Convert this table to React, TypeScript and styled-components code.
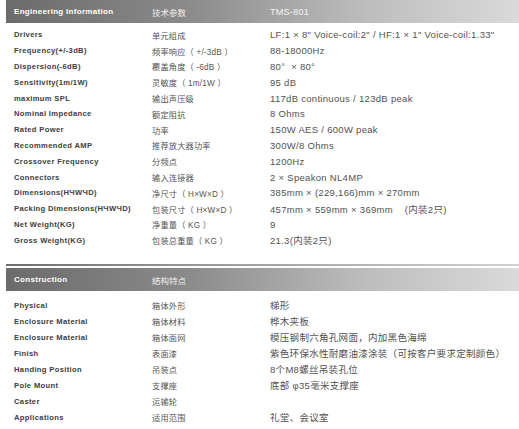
import React from "react";
import styled, { createGlobalStyle } from "styled-components";

const Global = createGlobalStyle`
  html, body { margin: 0; padding: 0; background: #ffffff; }
  body { font-family: "Liberation Sans", Arial, sans-serif; }
`;

const Page = styled.div`
  width: 519px;
  height: 429px;
  padding-left: 6px;
  box-sizing: border-box;
  overflow: hidden;
`;

const Section = styled.section<{ $top: number }>`
  display: flex;
  flex-direction: column;
  margin-top: ${(p) => p.$top}px;
`;

const Rule = styled.div`
  height: 2px;
  margin-bottom: 2px;
  background: linear-gradient(to right, #6e6e6e 0%, #9a9a9a 40%, #d2d2d2 100%);
`;

const HeaderBar = styled.div`
  display: grid;
  grid-template-columns: 138px 118px 1fr;
  align-items: center;
  height: 23px;
  padding-left: 8px;
  background: linear-gradient(to right, #6b6b6b 0%, #8a8a8a 35%, #bdbdbd 70%, #dadada 100%);
  color: #ffffff;
`;

const HeadLabel = styled.span`
  font-family: "Liberation Sans", Arial, sans-serif;
  font-weight: bold;
  font-size: 8px;
  letter-spacing: 0.3px;
`;

const HeadCn = styled.span`
  font-family: "Noto Sans CJK SC", sans-serif;
  font-size: 8.5px;
  color: #f0f0f0;
`;

const HeadValue = styled.span`
  font-family: "Liberation Sans", Arial, sans-serif;
  font-size: 9px;
  letter-spacing: 0.3px;
  color: #f4f4f4;
`;

const Rows = styled.div<{ $pad: number }>`
  display: flex;
  flex-direction: column;
  padding-top: ${(p) => p.$pad}px;
  padding-left: 8px;
`;

const Row = styled.div<{ $h: number }>`
  display: grid;
  grid-template-columns: 138px 118px 1fr;
  align-items: center;
  height: ${(p) => p.$h}px;
`;

const Label = styled.span`
  font-family: "Liberation Sans", Arial, sans-serif;
  font-weight: bold;
  font-size: 7.6px;
  letter-spacing: 0.35px;
  color: #404040;
  white-space: nowrap;
`;

const Cn = styled.span`
  font-family: "Liberation Sans", "Noto Sans CJK SC", sans-serif;
  font-size: 8.2px;
  letter-spacing: 0.2px;
  color: #555555;
  white-space: pre;
`;

const Value = styled.span`
  font-family: "Liberation Sans", "Noto Sans CJK SC", sans-serif;
  font-size: 9.5px;
  letter-spacing: 0.3px;
  color: #525252;
  white-space: pre;
`;

const engineering: [string, string, string][] = [
  ["Drivers", "单元组成", "LF:1 × 8\" Voice-coil:2\" / HF:1 × 1\" Voice-coil:1.33\""],
  ["Frequency(+/-3dB)", "频率响应（ +/-3dB ）", "88-18000Hz"],
  ["Dispersion(-6dB)", "覆盖角度（ -6dB ）", "80°  × 80°"],
  ["Sensitivity(1m/1W)", "灵敏度（ 1m/1W ）", "95 dB"],
  ["maximum SPL", "输出声压级", "117dB continuous / 123dB peak"],
  ["Nominal Impedance", "额定阻抗", "8 Ohms"],
  ["Rated Power", "功率", "150W AES / 600W peak"],
  ["Recommended  AMP", "推荐放大器功率", "300W/8 Ohms"],
  ["Crossover Frequency", "分频点", "1200Hz"],
  ["Connectors", "输入连接器", "2 × Speakon NL4MP"],
  ["Dimensions(HЧWЧD)", "净尺寸（ H×W×D ）", "385mm × (229,166)mm × 270mm"],
  ["Packing Dimensions(HЧWЧD)", "包装尺寸（ H×W×D ）", "457mm × 559mm × 369mm    (内装2只)"],
  ["Net Weight(KG)", "净重量（ KG ）", "9"],
  ["Gross Weight(KG)", "包装总重量（ KG ）", "21.3(内装2只)"],
];

const construction: [string, string, string][] = [
  ["Physical", "箱体外形", "梯形"],
  ["Enclosure Material", "箱体材料", "桦木夹板"],
  ["Enclosure Material", "箱体面网", "模压钢制六角孔网面，内加黑色海绵"],
  ["Finish", "表面漆", "紫色环保水性耐磨油漆涂装（可按客户要求定制颜色）"],
  ["Handing Position", "吊装点", "8个M8螺丝吊装孔位"],
  ["Pole Mount", "支撑座", "底部 φ35毫米支撑座"],
  ["Caster", "运输轮", ""],
  ["Applications", "适用范围", "礼堂、会议室"],
];

export default function App() {
  return (
    <>
      <Global />
      <Page>
        <Section $top={0}>
          <HeaderBar>
            <HeadLabel>Engineering Information</HeadLabel>
            <HeadCn>技术参数</HeadCn>
            <HeadValue>TMS-801</HeadValue>
          </HeaderBar>
          <Rows $pad={4}>
            {engineering.map(([a, b, c], i) => (
              <Row key={i} $h={15.8}>
                <Label>{a}</Label>
                <Cn>{b}</Cn>
                <Value>{c}</Value>
              </Row>
            ))}
          </Rows>
        </Section>
        <Section $top={16}>
          <Rule />
          <HeaderBar>
            <HeadLabel>Construction</HeadLabel>
            <HeadCn>结构特点</HeadCn>
            <HeadValue></HeadValue>
          </HeaderBar>
          <Rows $pad={6}>
            {construction.map(([a, b, c], i) => (
              <Row key={i} $h={16}>
                <Label>{a}</Label>
                <Cn>{b}</Cn>
                <Value>{c}</Value>
              </Row>
            ))}
          </Rows>
        </Section>
      </Page>
    </>
  );
}
